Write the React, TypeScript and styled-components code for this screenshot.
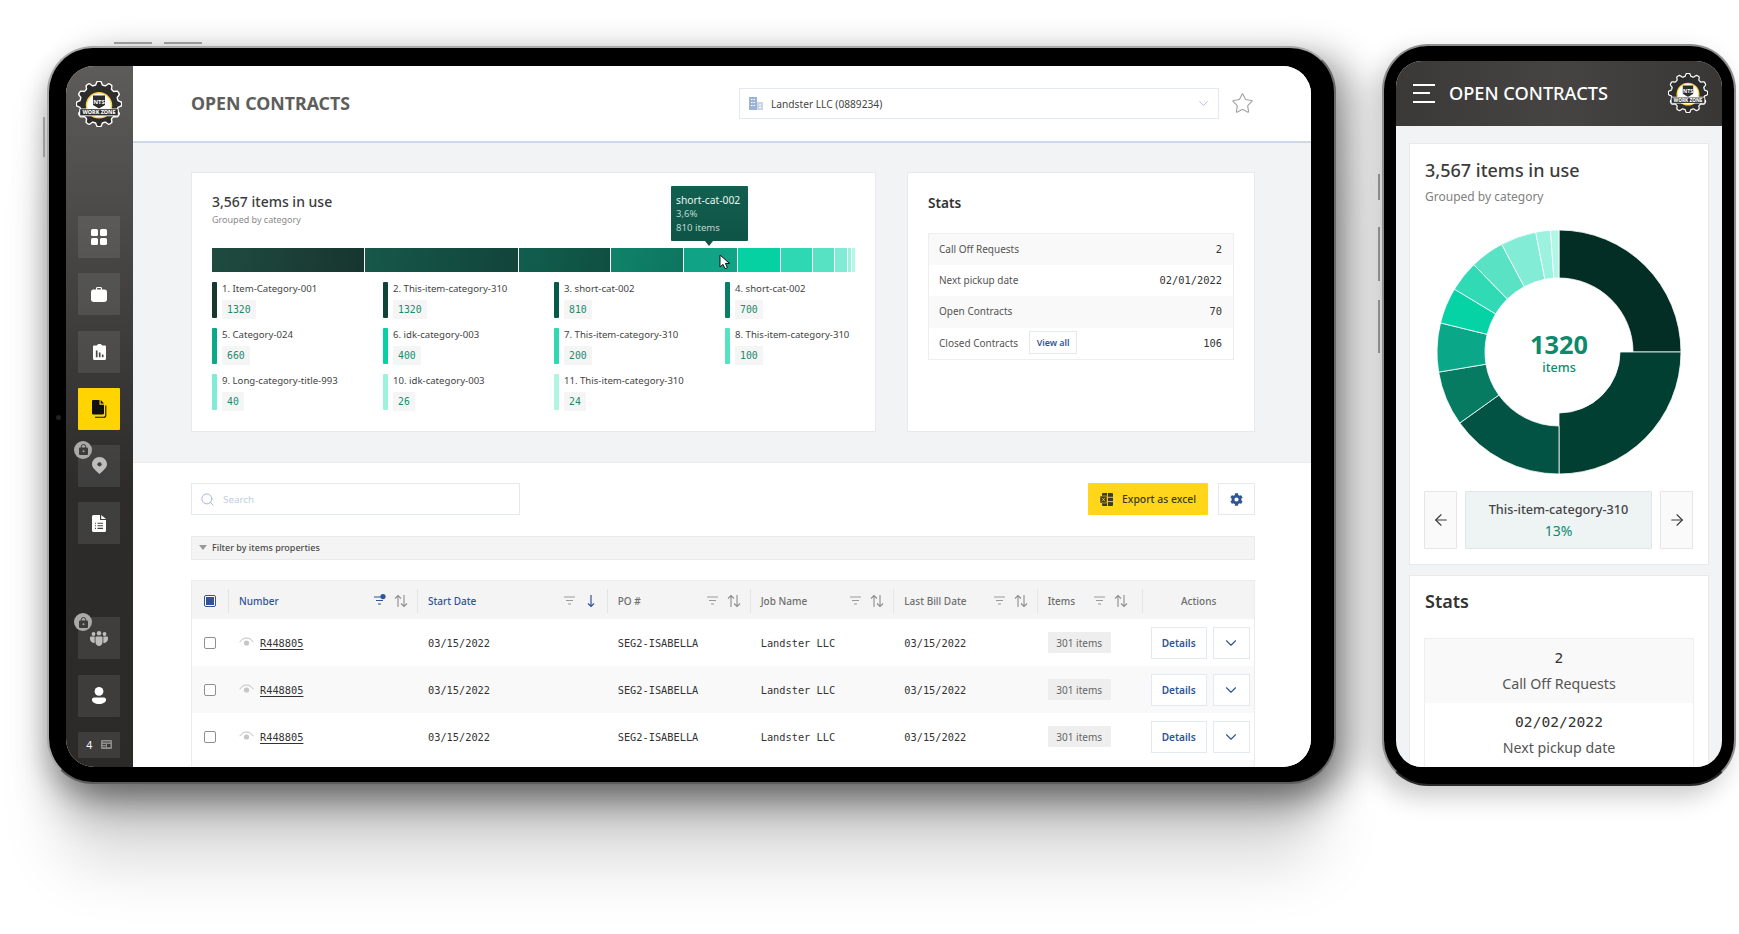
import React from "react";
import styled, { createGlobalStyle } from "styled-components";
import { ArrowLeft, ArrowRight, ChevronDown, Search as SearchIcon, Star } from "lucide-react";
import { FaCog } from "react-icons/fa";

const SANS = `"Noto Sans", "Liberation Sans", sans-serif`;
const MONO = `"DejaVu Sans Mono", "Liberation Mono", monospace`;
const BLUE = "#2f5597";
const COLS = "36px 189px 189.7px 143px 143.6px 143.4px 105px 112px";

const Global = createGlobalStyle`
  html, body { margin: 0; padding: 0; background: #fff; width: 1739px; height: 934px; overflow: hidden; }
  * { box-sizing: border-box; }
  body { font-family: ${SANS}; color: #393939; }
`;

const Stage = styled.div`
  width: 1739px;
  height: 934px;
  overflow: hidden;
  display: flex;
  align-items: flex-start;
  padding: 44px 0 0 47px;
  background: #fff;
`;

const TabletFrame = styled.div`
  position: relative;
  flex: none;
  width: 1289px;
  height: 738px;
  margin-top: 2px;
  padding: 18px 23px 15px 17px;
  background: #000;
  border: 2px solid #a8a8a8;
  border-bottom-color: #5c5c5c;
  border-right-color: #6a6a6a;
  border-radius: 46px;
  box-shadow:
    0 30px 40px -6px rgba(0, 0, 0, 0.3),
    0 96px 64px -18px rgba(0, 0, 0, 0.15),
    20px 6px 34px rgba(0, 0, 0, 0.3),
    -6px 10px 22px rgba(0, 0, 0, 0.1);
`;

const TopKey = styled.span<{ $left: number }>`
  position: absolute;
  top: -6px;
  left: ${(p) => p.$left}px;
  width: 38px;
  height: 2px;
  background: #999;
`;

const SideKey = styled.span`
  position: absolute;
  left: -6px;
  top: 69px;
  width: 2px;
  height: 40px;
  background: #9c9c9c;
`;

const Camera = styled.span`
  position: absolute;
  left: 7px;
  top: 367px;
  width: 5px;
  height: 5px;
  border-radius: 50%;
  background: #222;
`;

const TabletScreen = styled.div`
  display: flex;
  width: 1245px;
  height: 701px;
  overflow: hidden;
  border-radius: 28px;
  background: #fff;
`;

const Sidebar = styled.nav`
  flex: none;
  width: 66.5px;
  padding: 15px 12px 0;
  display: flex;
  flex-direction: column;
  align-items: center;
  gap: 15.2px;
  background: linear-gradient(180deg, #5d5c5a 0%, #444341 30%, #2d2c2b 60%, #2b2a29 100%);
`;

const LogoSlot = styled.div`
  height: 46px;
  margin-bottom: 74px;
`;

const SideButton = styled.div<{ $active?: boolean; $short?: boolean; $push?: number }>`
  position: relative;
  flex: none;
  width: 42px;
  height: ${(p) => (p.$short ? 26.5 : 42)}px;
  margin-top: ${(p) => p.$push ?? 0}px;
  display: flex;
  align-items: center;
  justify-content: center;
  gap: 9px;
  border-radius: 1px;
  color: ${(p) => (p.$active ? "#111" : "#fff")};
  background: ${(p) => (p.$active ? "#ffd400" : "rgba(255,255,255,0.09)")};
`;

const LockBadge = styled.span`
  position: absolute;
  left: -4px;
  top: -4px;
  width: 18px;
  height: 18px;
  border-radius: 50%;
  background: #a9a9a7;
  display: flex;
  align-items: center;
  justify-content: center;
`;

const CountText = styled.span`
  font-size: 10.5px;
  color: #fff;
`;

const Main = styled.main`
  flex: 1;
  min-width: 0;
  display: flex;
  flex-direction: column;
`;

const TopBar = styled.header`
  flex: none;
  height: 77px;
  padding: 0 0 2px 58.5px;
  display: flex;
  align-items: center;
  background: #fff;
  border-bottom: 2px solid #cfd8e8;
`;

const PageTitle = styled.h1`
  width: 548px;
  margin: 0;
  font-size: 17.8px;
  line-height: 24px;
  font-weight: 700;
  color: #5e5e5c;
`;

const Dropdown = styled.div`
  width: 480px;
  height: 31px;
  margin-top: 2px;
  padding: 0 7px 0 9px;
  display: flex;
  align-items: center;
  gap: 8px;
  border: 1px solid #e3e8f1;
  font-size: 10.2px;
  color: #444;
`;

const DropdownLabel = styled.span`
  flex: 1;
`;

const StarSlot = styled.div`
  margin: 2px 0 0 12px;
  display: flex;
  color: #a3a3a3;
`;

const Summary = styled.section`
  flex: none;
  height: 320px;
  padding: 29px 56px 0 58.5px;
  display: flex;
  gap: 31px;
  background: #f2f3f5;
  border-bottom: 1px solid #e9eaec;
`;

const Panel = styled.div<{ $width: number }>`
  position: relative;
  flex: none;
  width: ${(p) => p.$width}px;
  height: 260px;
  padding: 20px;
  background: #fff;
  border: 1px solid #e8e9eb;
`;

const CardTitle = styled.h2`
  margin: 0;
  font-size: 14px;
  line-height: 18px;
  font-weight: 500;
  color: #3c3c3c;
`;

const CardSub = styled.div`
  margin-top: 2px;
  font-size: 9px;
  line-height: 14px;
  color: #8a8a8a;
`;

const Bar = styled.div`
  margin-top: 21px;
  height: 24px;
  display: flex;
  gap: 1px;
`;

const BarPiece = styled.div<{ $width: number; $bg: string }>`
  flex: none;
  width: ${(p) => p.$width}px;
  background: ${(p) => p.$bg};
`;

const Tooltip = styled.div`
  position: absolute;
  left: 479px;
  top: 13px;
  width: 77px;
  height: 55px;
  padding: 7px 5px;
  border-radius: 1px;
  font-size: 9.6px;
  line-height: 14.2px;
  color: #b9d6cf;
  background: linear-gradient(180deg, #125f50, #0f5446);
  &::after {
    content: "";
    position: absolute;
    left: 34px;
    top: 100%;
    border: 4px solid transparent;
    border-top: 5px solid #0f5446;
  }
`;

const TipHead = styled.div`
  font-size: 10.3px;
  color: #eaf5f2;
`;

const Pointer = styled.svg`
  position: absolute;
  left: 527px;
  top: 81px;
`;

const Legend = styled.div`
  margin-top: 10px;
  display: grid;
  grid-template-columns: repeat(4, 171px);
  row-gap: 10px;
`;

const LegendItem = styled.div`
  height: 36px;
  display: flex;
  gap: 5px;
`;

const LegendSwatch = styled.span<{ $bg: string }>`
  flex: none;
  width: 5px;
  height: 36px;
  border-radius: 1px;
  background: ${(p) => p.$bg};
`;

const LegendName = styled.div`
  font-size: 9.6px;
  line-height: 14px;
  color: #444;
  white-space: nowrap;
`;

const LegendChip = styled.span`
  display: inline-block;
  margin-top: 3px;
  height: 19px;
  padding: 0 5px;
  font-family: ${MONO};
  font-size: 9.8px;
  line-height: 19px;
  color: #1a8a6e;
  background: #f5f5f5;
`;

const StatsTitle = styled.h2`
  margin: 1px 0 0;
  font-size: 13.6px;
  line-height: 18px;
  font-weight: 600;
  color: #333;
`;

const StatsBox = styled.div`
  margin-top: 21px;
  border: 1px solid #eeeeee;
`;

const StatsRow = styled.div<{ $odd: boolean }>`
  height: 31.2px;
  padding: 0 11px 1px 10px;
  display: flex;
  align-items: center;
  gap: 11px;
  font-size: 10px;
  color: #555;
  background: ${(p) => (p.$odd ? "#f9f9f9" : "#fff")};
`;

const StatsValue = styled.span`
  margin-left: auto;
  font-family: ${MONO};
  font-size: 10.4px;
  color: #333;
`;

const ViewAll = styled.span`
  height: 23px;
  width: 48px;
  display: flex;
  align-items: center;
  justify-content: center;
  border: 1px solid #e3e8f1;
  font-size: 8.8px;
  font-weight: 600;
  color: ${BLUE};
`;

const Lower = styled.section`
  flex: 1;
  min-height: 0;
  padding: 20px 56px 0 58.5px;
  background: #fff;
`;

const ToolRow = styled.div`
  height: 32px;
  display: flex;
  align-items: stretch;
`;

const SearchBox = styled.div`
  width: 329px;
  padding: 0 8px;
  display: flex;
  align-items: center;
  gap: 8px;
  border: 1px solid #e3e8f1;
  font-size: 9.8px;
  color: #c0cee4;
`;

const ExportButton = styled.div`
  width: 120px;
  margin-left: auto;
  display: flex;
  align-items: center;
  justify-content: center;
  gap: 9px;
  font-size: 10.4px;
  font-weight: 500;
  color: #3a3a2a;
  background: #ffd61a;
  border-radius: 1px;
`;

const GearButton = styled.div`
  width: 37px;
  margin-left: 10px;
  display: flex;
  align-items: center;
  justify-content: center;
  border: 1px solid #e3e8f1;
  color: ${BLUE};
`;

const FilterBar = styled.div`
  margin-top: 21px;
  height: 24px;
  padding: 0 19px 2px 7px;
  display: flex;
  align-items: center;
  gap: 5px;
  font-size: 9px;
  font-weight: 500;
  color: #4a4a4a;
  background: #f4f4f4;
  border: 1px solid #eaeaea;
`;

const Caret = styled.span`
  width: 0;
  height: 0;
  border: 4px solid transparent;
  border-top: 5px solid #999;
  margin-top: 5px;
`;

const Table = styled.div`
  margin-top: 20px;
  border: 1px solid #ececec;
  border-bottom: 0;
`;

const HeadRow = styled.div`
  height: 38px;
  padding-top: 1px;
  display: grid;
  grid-template-columns: ${COLS};
  align-items: center;
  background: #f4f4f4;
`;

const BodyRow = styled.div<{ $odd: boolean }>`
  height: 47px;
  display: grid;
  grid-template-columns: ${COLS};
  align-items: center;
  font-family: ${MONO};
  font-size: 10.3px;
  color: #333;
  background: ${(p) => (p.$odd ? "#f9f9f9" : "#fff")};
`;

const CheckCell = styled.div`
  display: flex;
  justify-content: center;
`;

const Check = styled.span<{ $on?: boolean }>`
  width: 12px;
  height: 12px;
  display: flex;
  align-items: center;
  justify-content: center;
  border-radius: 2px;
  border: 1.4px solid ${(p) => (p.$on ? BLUE : "#8f8f8f")};
  background: #fff;
  &::after {
    content: "";
    display: ${(p) => (p.$on ? "block" : "none")};
    width: 8px;
    height: 8px;
    background: ${BLUE};
  }
`;

const HeadCell = styled.div<{ $center?: boolean; $on?: boolean; $tail?: number }>`
  height: 24px;
  padding: 0 ${(p) => p.$tail ?? 9}px 0 10px;
  display: flex;
  align-items: center;
  justify-content: ${(p) => (p.$center ? "center" : "flex-start")};
  gap: 7px;
  border-left: 1px solid #e5e5e5;
  font-size: 10px;
  font-weight: 500;
  color: ${(p) => (p.$on ? BLUE : "#6e6e6e")};
`;

const HeadLabel = styled.span`
  margin-right: auto;
  white-space: nowrap;
`;

const BodyCell = styled.div<{ $pad?: number }>`
  padding-left: ${(p) => p.$pad ?? 11}px;
  display: flex;
  align-items: center;
  white-space: nowrap;
`;

const RowLink = styled.span`
  margin-left: 6px;
  text-decoration: underline;
  text-underline-offset: 2px;
`;

const ItemsChip = styled.span`
  width: 63px;
  height: 21px;
  display: flex;
  align-items: center;
  justify-content: center;
  font-family: ${SANS};
  font-size: 10px;
  color: #666;
  background: #eeeeee;
  border-radius: 1px;
`;

const RowActions = styled.div`
  padding-left: 9px;
  display: flex;
  gap: 6px;
`;

const DetailsBtn = styled.span`
  width: 56px;
  height: 32px;
  display: flex;
  align-items: center;
  justify-content: center;
  border: 1px solid #e3e8f1;
  background: #fff;
  font-family: ${SANS};
  font-size: 10.1px;
  font-weight: 600;
  color: ${BLUE};
`;

const ChevronBtn = styled.span`
  width: 37px;
  height: 32px;
  display: flex;
  align-items: center;
  justify-content: center;
  border: 1px solid #e3e8f1;
  background: #fff;
  color: ${BLUE};
`;

const PhoneFrame = styled.div`
  position: relative;
  flex: none;
  width: 354px;
  height: 742px;
  margin-left: 46px;
  padding: 15px 12px 17px 12px;
  background: #000;
  border: 2px solid #8f8f8f;
  border-bottom-color: #2a2a2a;
  border-radius: 46px;
  box-shadow: -8px 10px 26px rgba(0, 0, 0, 0.22);
`;

const PhoneKey = styled.span<{ $top: number; $h: number }>`
  position: absolute;
  left: -6px;
  top: ${(p) => p.$top}px;
  width: 2px;
  height: ${(p) => p.$h}px;
  background: #8b8b8b;
`;

const PhoneScreen = styled.div`
  width: 326px;
  height: 706px;
  overflow: hidden;
  border-radius: 26px;
  background: #f2f3f5;
`;

const PhoneBar = styled.header`
  height: 65px;
  padding: 0 14px 1px 17px;
  display: flex;
  align-items: center;
  gap: 14px;
  background: linear-gradient(90deg, #3a3937, #454442 50%, #383735);
`;

const Burger = styled.div`
  width: 22px;
  height: 19px;
  display: flex;
  flex-direction: column;
  justify-content: space-between;
`;

const BurgerLine = styled.span<{ $short?: boolean }>`
  height: 2px;
  width: ${(p) => (p.$short ? 17 : 22)}px;
  background: #fff;
`;

const PhoneTitle = styled.h1`
  flex: 1;
  margin: 0;
  font-size: 18.2px;
  font-weight: 500;
  color: #fff;
`;

const PhoneBody = styled.div`
  padding: 17px 13px 0;
`;

const PhoneCard = styled.div<{ $top?: number }>`
  margin-top: ${(p) => p.$top ?? 0}px;
  padding: 14px 15px 15px;
  background: #fff;
  border: 1px solid #e8e9eb;
`;

const PhoneCardTitle = styled.h2`
  margin: 0;
  font-size: 18px;
  line-height: 24px;
  font-weight: 500;
  color: #3c3c3c;
`;

const PhoneSub = styled.div`
  margin-top: 6px;
  font-size: 12px;
  line-height: 18px;
  color: #808080;
`;

const DonutWrap = styled.div`
  position: relative;
  margin-top: 22.7px;
  height: 246px;
  display: flex;
  justify-content: center;
`;

const DonutCenter = styled.div`
  position: absolute;
  left: 0;
  right: 0;
  top: 100px;
  text-align: center;
  color: #0c8a6c;
`;

const DonutValue = styled.div`
  font-size: 25.4px;
  line-height: 30px;
  font-weight: 700;
`;

const DonutUnit = styled.div`
  font-size: 12.6px;
  line-height: 18px;
  font-weight: 500;
`;

const Pager = styled.div`
  margin: 16.3px 0 0 -1px;
  height: 58px;
  display: flex;
  gap: 8px;
`;

const PagerArrow = styled.div`
  flex: none;
  width: 33px;
  display: flex;
  align-items: center;
  justify-content: center;
  background: #fafafa;
  border: 1px solid #e6e6e6;
  border-radius: 1px;
  color: #3a3a3a;
`;

const PagerMiddle = styled.div`
  flex: 1;
  display: flex;
  flex-direction: column;
  align-items: center;
  justify-content: center;
  gap: 3px;
  background: #eef3f4;
  border: 1px solid #e2e6e8;
  border-radius: 1px;
  font-size: 12.7px;
  font-weight: 500;
  color: #444;
`;

const PagerPct = styled.span`
  font-size: 14px;
  font-weight: 400;
  color: #0c8a6c;
`;

const PhoneStatsTitle = styled.h2`
  margin: -1px 0 0;
  font-size: 18px;
  line-height: 24px;
  font-weight: 600;
  color: #333;
`;

const PhoneStatsBox = styled.div`
  margin: 25px -1px 0;
  border: 1px solid #eeeeee;
`;

const PhoneStat = styled.div<{ $odd: boolean }>`
  height: 64px;
  display: flex;
  flex-direction: column;
  align-items: center;
  justify-content: center;
  gap: 8px;
  font-size: 14.2px;
  line-height: 18px;
  color: #555;
  background: ${(p) => (p.$odd ? "#f9f9f9" : "#fff")};
`;

const PhoneStatValue = styled.span`
  font-family: ${MONO};
  font-size: 14.6px;
  line-height: 18px;
  color: #333;
`;

/* ---------- drawings ---------- */

function gearPoints(cx: number, cy: number, r1: number, r2: number, teeth: number) {
  const pts: string[] = [];
  const n = teeth * 12;
  for (let i = 0; i < n; i++) {
    const a = (i / n) * Math.PI * 2;
    const w = Math.cos(a * teeth);
    const s = Math.max(-1, Math.min(1, w * 1.8));
    const r = (r1 + r2) / 2 + (s * (r1 - r2)) / 2;
    pts.push(`${(cx + r * Math.sin(a)).toFixed(2)},${(cy - r * Math.cos(a)).toFixed(2)}`);
  }
  return pts.join(" ");
}

const Logo = ({ size }: { size: number }) => (
  <svg width={size} height={size} viewBox="0 0 46 46">
    <polygon points={gearPoints(23, 23, 22.6, 19.2, 12)} fill="#2d2d2d" stroke="#fff" strokeWidth="1.4" />
    <circle cx="23" cy="24.3" r="13.2" fill="#ffd23a" />
    <circle cx="23" cy="24.3" r="11.8" fill="#fff" />
    <path d="M17 14.5h12v9.5l-6 3.6-6-3.6z" fill="#2d2d2d" />
    <text x="23" y="23" textAnchor="middle" fontFamily={SANS} fontSize="6" fontWeight="700" fill="#fff">NTS</text>
    <rect x="3.2" y="27.4" width="39.6" height="7.8" rx="1.5" fill="#fff" />
    <rect x="4.2" y="28.2" width="37.6" height="6.2" fill="#2d2d2d" />
    <text x="23" y="33.4" textAnchor="middle" fontFamily={SANS} fontSize="5.4" fontWeight="800" fill="#fff">WORK ZONE</text>
  </svg>
);

const GridIcon = () => (
  <svg width="16" height="16" viewBox="0 0 16 16" fill="currentColor">
    <rect width="7" height="7" rx="1.6" />
    <rect x="9" width="7" height="7" rx="1.6" />
    <rect y="9" width="7" height="7" rx="1.6" />
    <rect x="9" y="9" width="7" height="7" rx="1.6" />
  </svg>
);

const CaseIcon = () => (
  <svg width="16" height="15" viewBox="0 0 16 15" fill="currentColor">
    <path d="M5 3V1.5C5 .7 5.6 0 6.4 0h3.2C10.4 0 11 .7 11 1.5V3h-1.2V1.4c0-.2-.1-.3-.3-.3h-3c-.2 0-.3.1-.3.3V3z" />
    <rect y="2.6" width="16" height="12.4" rx="2.4" />
  </svg>
);

const ClipIcon = () => (
  <svg width="13" height="16" viewBox="0 0 13 16">
    <path d="M1.2 1.6h2.6C4 .6 5.200 0 6.500 0s2.500.6 2.700 1.600h2.600c.7 0 1.200.5 1.200 1.200v12c0 .7-.5 1.200-1.200 1.200H1.200C.5 16 0 15.500 0 14.800v-12c0-.7.5-1.200 1.200-1.200z" fill="currentColor" />
    <path d="M3.700 13.300V6.500M6.700 13.300V8.500M9.700 13.300v-2.800" stroke="#4a4948" strokeWidth="1.7" />
  </svg>
);

const FilesIcon = () => (
  <svg width="15" height="18" viewBox="0 0 15 18" fill="currentColor">
    <path d="M1.200 0h6.300v4.800h4.500v8.400c0 .7-.5 1.200-1.200 1.200H1.200C.5 14.400 0 13.900 0 13.200V1.200C0 .5.500 0 1.200 0z" />
    <path d="M8.700 0 12 3.600H8.700z" />
    <path d="M13.800 5.400v9.800c0 1.100-.9 2-2 2H3" fill="none" stroke="currentColor" strokeWidth="1.100" />
  </svg>
);

const PinIcon = () => (
  <svg width="15" height="17" viewBox="0 0 15 17">
    <path d="M7.5 17C3.6 13.5 0 10.8 0 7.3 0 3.3 3.3 0 7.5 0S15 3.3 15 7.3c0 3.5-3.6 6.2-7.5 9.7z" fill="#bdbdbb" />
    <circle cx="7.5" cy="7.3" r="2.1" fill="#403f3e" />
  </svg>
);

const DocIcon = () => (
  <svg width="14" height="17" viewBox="0 0 14 17">
    <path d="M1.5 0H8v5h6v10.500a1.500 1.500 0 0 1-1.500 1.500h-11A1.500 1.500 0 0 1 0 15.500v-14A1.500 1.500 0 0 1 1.500 0z" fill="currentColor" />
    <path d="M9.200 0 14 3.900H9.200z" fill="currentColor" />
    <path d="M3 8.200h1M5.500 8.200H11M3 10.800h1M5.500 10.800H11M3 13.400h1M5.500 13.400H11" stroke="#444342" strokeWidth="1.100" />
  </svg>
);

const TeamIcon = () => (
  <svg width="18" height="15" viewBox="0 0 18 15" fill="#bdbdbb">
    <circle cx="9" cy="2.200" r="2.200" />
    <circle cx="3.500" cy="3" r="1.900" />
    <circle cx="14.500" cy="3" r="1.900" />
    <path d="M5.500 6.500c0-.6.500-1 1-1h5c.5 0 1 .4 1 1V11c0 2.200-1.500 4-3.500 4s-3.500-1.800-3.500-4z" />
    <path d="M0 6.500c0-.5.400-1 1-1h3.200c.3 0 .5.300.5.600V10.500l-.2 1.700C2 12 0 10 0 8z" />
    <path d="M18 6.500c0-.5-.4-1-1-1h-3.200c-.3 0-.5.300-.5.600V10.500l.2 1.700C16 12 18 10 18 8z" />
  </svg>
);

const UserIcon = () => (
  <svg width="14" height="17" viewBox="0 0 14 17" fill="currentColor">
    <circle cx="7" cy="4.400" r="4.400" />
    <path d="M0 12.400c0-1.300 1-2 2.200-2h9.600c1.200 0 2.200.7 2.200 2v.6c0 2.300-3 4-7 4s-7-1.700-7-4z" />
  </svg>
);

const LockIcon = () => (
  <svg width="9" height="11" viewBox="0 0 9 11">
    <path d="M2.300 4V2.700a2.200 2.200 0 0 1 4.400 0V4" fill="none" stroke="#3c3b3a" strokeWidth="1" />
    <rect y="3.600" width="9" height="7.400" rx="1" fill="#3c3b3a" />
    <circle cx="4.500" cy="7.300" r="1" fill="#a9a9a7" />
  </svg>
);

const CardsIcon = () => (
  <svg width="11" height="9" viewBox="0 0 11 9">
    <rect width="11" height="9" rx="1" fill="#8e8e8c" />
    <path d="M1.500 2h8M1.500 4.500h3.500M1.500 6.700h3.500" stroke="#3a3938" strokeWidth=".9" />
    <rect x="6" y="4" width="3.500" height="3.200" fill="#3a3938" />
  </svg>
);

const BuildingIcon = () => (
  <svg width="14" height="13" viewBox="0 0 14 13">
    <rect x="0" y="0" width="8" height="13" fill="#9db3d6" />
    <rect x="8" y="5" width="6" height="8" fill="#c9d5e8" />
    <path d="M2 2.500h1.500M4.500 2.500H6M2 5.500h1.500M4.500 5.500H6M2 8.500h1.500M4.500 8.500H6M10 8h2M10 10.500h2" stroke="#fff" strokeWidth="1" />
  </svg>
);

const FilterIcon = ({ color = "#9a9a9a", dot }: { color?: string; dot?: boolean }) => (
  <svg width="14" height="13" viewBox="0 0 14 13" fill="none">
    <path d="M1 3h11M3 6.500h7M5 10h3" stroke={color} strokeWidth="1.100" />
    {dot && <circle cx="10" cy="2.600" r="2.600" fill={color} />}
  </svg>
);

const SortIcon = ({ left = "#8d8d8d", right = "#8d8d8d" }: { left?: string; right?: string }) => (
  <svg width="14" height="14" viewBox="0 0 14 14" fill="none">
    <path d="M4 13V1.500M1 4.500l3-3 3 3" stroke={left} strokeWidth="1.100" />
    <path d="M10 1v11.500M7 9.500l3 3 3-3" stroke={right} strokeWidth="1.100" />
  </svg>
);

const DownIcon = () => (
  <svg width="14" height="14" viewBox="0 0 14 14" fill="none">
    <path d="M7 1v11.500M4 9.500l3 3 3-3" stroke={BLUE} strokeWidth="1.200" />
  </svg>
);

const EyeIcon = () => (
  <svg width="15" height="11" viewBox="0 0 15 11" fill="none">
    <path d="M.7 5.200C2.400 2.600 4.800 1 7.500 1s5.100 1.600 6.800 4.200" stroke="#bcbcbc" strokeWidth="1" />
    <circle cx="7.500" cy="6" r="2.600" fill="#c6c6c6" />
  </svg>
);

const ExcelIcon = () => (
  <svg width="13" height="13" viewBox="0 0 13 13">
    <rect x="2" y="0" width="11" height="13" rx="1" fill="#3b3b2c" />
    <path d="M7.500 0v13M2 4.300h11M2 8.600h11" stroke="#ffd61a" strokeWidth=".9" />
    <rect x="0" y="3" width="7" height="7" rx=".6" fill="#3b3b2c" stroke="#ffd61a" strokeWidth=".6" />
    <path d="M2 4.800 5 8.300M5 4.800 2 8.300" stroke="#ffd61a" strokeWidth=".8" />
  </svg>
);

const CursorIcon = () => (
  <Pointer width="14" height="16" viewBox="0 0 14 16">
    <path d="M1 1v12l3-2.600 2 4.300 2.400-1-2-4.300H10.500z" fill="#fff" stroke="#111" strokeWidth="1" />
  </Pointer>
);

/* ---------- data ---------- */

const segments = [
  { w: 152, bg: "linear-gradient(100deg,#1f4b41,#17352f)" },
  { w: 152.5, bg: "linear-gradient(100deg,#16584a,#12443a)" },
  { w: 91, bg: "linear-gradient(100deg,#115f4e,#0f4f41)" },
  { w: 72.5, bg: "linear-gradient(100deg,#10836a,#0d7560)" },
  { w: 52.5, bg: "#10a386" },
  { w: 42, bg: "#05d1a3" },
  { w: 31, bg: "#2dd8b2" },
  { w: 21, bg: "#58e2c4" },
  { w: 12, bg: "#80ecd5" },
  { w: 3, bg: "#9bf2dd" },
  { w: 3, bg: "#b5f6e7" },
];

const legend = [
  { name: "1. Item-Category-001", value: "1320", color: "#17382f" },
  { name: "2. This-item-category-310", value: "1320", color: "#0f4539" },
  { name: "3. short-cat-002", value: "810", color: "#05594a" },
  { name: "4. short-cat-002", value: "700", color: "#087e66" },
  { name: "5. Category-024", value: "660", color: "#0aa987" },
  { name: "6. idk-category-003", value: "400", color: "#05d1a3" },
  { name: "7. This-item-category-310", value: "200", color: "#2dd8b2" },
  { name: "8. This-item-category-310", value: "100", color: "#58e2c4" },
  { name: "9. Long-category-title-993", value: "40", color: "#80ecd5" },
  { name: "10. idk-category-003", value: "26", color: "#9bf2dd" },
  { name: "11. This-item-category-310", value: "24", color: "#aef5e4" },
];

const stats = [
  { label: "Call Off Requests", value: "2" },
  { label: "Next pickup date", value: "02/01/2022" },
  { label: "Open Contracts", value: "70" },
  { label: "Closed Contracts", value: "106", link: true },
];

const slices = [
  { from: 0, to: 90, fill: "#032e25", inner: 74 },
  { from: 90, to: 180, fill: "#013f33", inner: 61 },
  { from: 180, to: 234.4, fill: "#025343", inner: 74 },
  { from: 234.4, to: 260.5, fill: "#077b62", inner: 74 },
  { from: 260.5, to: 283.8, fill: "#0aa888", inner: 74 },
  { from: 283.8, to: 301, fill: "#05d2a5", inner: 74 },
  { from: 301, to: 315.7, fill: "#30dab4", inner: 74 },
  { from: 315.7, to: 332, fill: "#5ae2c5", inner: 74 },
  { from: 332, to: 349, fill: "#82ecd6", inner: 74 },
  { from: 349, to: 356, fill: "#9bf2de", inner: 74 },
  { from: 356, to: 360, fill: "#b2f6e6", inner: 74 },
];

function arc(from: number, to: number, inner: number, outer: number) {
  const c = 123;
  const pt = (r: number, deg: number) => {
    const a = (deg * Math.PI) / 180;
    return `${(c + r * Math.sin(a)).toFixed(2)} ${(c - r * Math.cos(a)).toFixed(2)}`;
  };
  const big = to - from > 180 ? 1 : 0;
  return `M${pt(outer, from)}A${outer} ${outer} 0 ${big} 1 ${pt(outer, to)}L${pt(inner, to)}A${inner} ${inner} 0 ${big} 0 ${pt(inner, from)}Z`;
}

type Head = { label: string; on?: boolean; filterOn?: boolean; down?: boolean; tail?: number };

const heads: Head[] = [
  { label: "Number", on: true, filterOn: true },
  { label: "Start Date", on: true, down: true },
  { label: "PO #" },
  { label: "Job Name" },
  { label: "Last Bill Date" },
  { label: "Items", tail: 14 },
];

const rows = [0, 1, 2];

export default function App() {
  return (
    <Stage>
      <Global />
      <TabletFrame>
        <TopKey $left={65} />
        <TopKey $left={115} />
        <SideKey />
        <Camera />
        <TabletScreen>
          <Sidebar>
            <LogoSlot>
              <Logo size={46} />
            </LogoSlot>
            <SideButton><GridIcon /></SideButton>
            <SideButton><CaseIcon /></SideButton>
            <SideButton><ClipIcon /></SideButton>
            <SideButton $active><FilesIcon /></SideButton>
            <SideButton>
              <LockBadge><LockIcon /></LockBadge>
              <PinIcon />
            </SideButton>
            <SideButton><DocIcon /></SideButton>
            <SideButton $push={58}>
              <LockBadge><LockIcon /></LockBadge>
              <TeamIcon />
            </SideButton>
            <SideButton><UserIcon /></SideButton>
            <SideButton $short>
              <CountText>4</CountText>
              <CardsIcon />
            </SideButton>
          </Sidebar>
          <Main>
            <TopBar>
              <PageTitle>OPEN CONTRACTS</PageTitle>
              <Dropdown>
                <BuildingIcon />
                <DropdownLabel>Landster LLC (0889234)</DropdownLabel>
                <ChevronDown size={15} color="#9db3d6" strokeWidth={1.3} />
              </Dropdown>
              <StarSlot><Star size={23} strokeWidth={1.2} /></StarSlot>
            </TopBar>
            <Summary>
              <Panel $width={685}>
                <CardTitle>3,567 items in use</CardTitle>
                <CardSub>Grouped by category</CardSub>
                <Bar>
                  {segments.map((s, i) => (
                    <BarPiece key={i} $width={s.w} $bg={s.bg} />
                  ))}
                </Bar>
                <Legend>
                  {legend.map((l) => (
                    <LegendItem key={l.name}>
                      <LegendSwatch $bg={l.color} />
                      <div>
                        <LegendName>{l.name}</LegendName>
                        <LegendChip>{l.value}</LegendChip>
                      </div>
                    </LegendItem>
                  ))}
                </Legend>
                <Tooltip>
                  <TipHead>short-cat-002</TipHead>
                  <div>3,6%</div>
                  <div>810 items</div>
                </Tooltip>
                <CursorIcon />
              </Panel>
              <Panel $width={348}>
                <StatsTitle>Stats</StatsTitle>
                <StatsBox>
                  {stats.map((s, i) => (
                    <StatsRow key={s.label} $odd={i % 2 === 0}>
                      <span>{s.label}</span>
                      {s.link && <ViewAll>View all</ViewAll>}
                      <StatsValue>{s.value}</StatsValue>
                    </StatsRow>
                  ))}
                </StatsBox>
              </Panel>
            </Summary>
            <Lower>
              <ToolRow>
                <SearchBox>
                  <SearchIcon size={15} color="#9db3d6" strokeWidth={1.5} />
                  <span>Search</span>
                </SearchBox>
                <ExportButton>
                  <ExcelIcon />
                  <span>Export as excel</span>
                </ExportButton>
                <GearButton><FaCog size={13} /></GearButton>
              </ToolRow>
              <FilterBar>
                <Caret />
                <span>Filter by items properties</span>
              </FilterBar>
              <Table>
                <HeadRow>
                  <CheckCell><Check $on /></CheckCell>
                  {heads.map((h) => (
                    <HeadCell key={h.label} $on={h.on} $tail={h.tail}>
                      <HeadLabel>{h.label}</HeadLabel>
                      <FilterIcon color={h.filterOn ? BLUE : "#9a9a9a"} dot={h.filterOn} />
                      {h.down ? <DownIcon /> : <SortIcon />}
                    </HeadCell>
                  ))}
                  <HeadCell $center>Actions</HeadCell>
                </HeadRow>
                {rows.map((r) => (
                  <BodyRow key={r} $odd={r % 2 === 1}>
                    <CheckCell><Check /></CheckCell>
                    <BodyCell $pad={11}>
                      <EyeIcon />
                      <RowLink>R448805</RowLink>
                    </BodyCell>
                    <BodyCell>03/15/2022</BodyCell>
                    <BodyCell>SEG2-ISABELLA</BodyCell>
                    <BodyCell>Landster LLC</BodyCell>
                    <BodyCell>03/15/2022</BodyCell>
                    <BodyCell><ItemsChip>301 items</ItemsChip></BodyCell>
                    <RowActions>
                      <DetailsBtn>Details</DetailsBtn>
                      <ChevronBtn><ChevronDown size={18} strokeWidth={1.5} /></ChevronBtn>
                    </RowActions>
                  </BodyRow>
                ))}
                <BodyRow $odd />
              </Table>
            </Lower>
          </Main>
        </TabletScreen>
      </TabletFrame>

      <PhoneFrame>
        <PhoneKey $top={128} $h={26} />
        <PhoneKey $top={181} $h={54} />
        <PhoneKey $top={254} $h={53} />
        <PhoneScreen>
          <PhoneBar>
            <Burger>
              <BurgerLine />
              <BurgerLine $short />
              <BurgerLine />
            </Burger>
            <PhoneTitle>OPEN CONTRACTS</PhoneTitle>
            <Logo size={40} />
          </PhoneBar>
          <PhoneBody>
            <PhoneCard>
              <PhoneCardTitle>3,567 items in use</PhoneCardTitle>
              <PhoneSub>Grouped by category</PhoneSub>
              <DonutWrap>
                <svg width="246" height="246" viewBox="0 0 246 246">
                  {slices.map((s) => (
                    <path key={s.from} d={arc(s.from, s.to, s.inner, 122)} fill={s.fill} stroke="#fff" strokeWidth="0.8" />
                  ))}
                </svg>
                <DonutCenter>
                  <DonutValue>1320</DonutValue>
                  <DonutUnit>items</DonutUnit>
                </DonutCenter>
              </DonutWrap>
              <Pager>
                <PagerArrow><ArrowLeft size={18} strokeWidth={1.5} /></PagerArrow>
                <PagerMiddle>
                  <span>This-item-category-310</span>
                  <PagerPct>13%</PagerPct>
                </PagerMiddle>
                <PagerArrow><ArrowRight size={18} strokeWidth={1.5} /></PagerArrow>
              </Pager>
            </PhoneCard>
            <PhoneCard $top={10}>
              <PhoneStatsTitle>Stats</PhoneStatsTitle>
              <PhoneStatsBox>
                <PhoneStat $odd>
                  <PhoneStatValue>2</PhoneStatValue>
                  <span>Call Off Requests</span>
                </PhoneStat>
                <PhoneStat $odd={false}>
                  <PhoneStatValue>02/02/2022</PhoneStatValue>
                  <span>Next pickup date</span>
                </PhoneStat>
              </PhoneStatsBox>
            </PhoneCard>
          </PhoneBody>
        </PhoneScreen>
      </PhoneFrame>
    </Stage>
  );
}
